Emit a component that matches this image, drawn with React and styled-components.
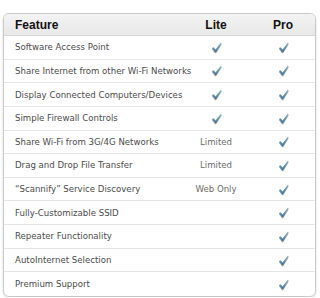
import React from "react";
import styled, { createGlobalStyle } from "styled-components";

const GlobalStyle = createGlobalStyle`
  body {
    margin: 0;
    background: #fff;
    font-family: "DejaVu Sans", "Liberation Sans", sans-serif;
  }
`;

const Table = styled.div`
  box-sizing: border-box;
  width: 313px;
  height: 284px;
  margin: 13px 0 0 3px;
  border: 1px solid #c9c9c9;
  border-radius: 6px;
  box-shadow: 0 1px 2px rgba(0, 0, 0, 0.18);
  overflow: hidden;
  display: grid;
  grid-template-columns: 177px 70px 1fr;
  grid-template-rows: 22px repeat(11, 1fr);
`;

const HeadCell = styled.div`
  display: flex;
  align-items: center;
  justify-content: ${(p) => (p.left ? "flex-start" : "center")};
  padding-left: ${(p) => (p.left ? "11px" : "0")};
  background: linear-gradient(#f3f3f3, #e8e8e8);
  border-bottom: 1px solid #d6d6d6;
  font-family: "Liberation Sans", Arial, sans-serif;
  font-weight: bold;
  font-size: 12px;
  color: #111;
`;

const Cell = styled.div`
  display: flex;
  align-items: center;
  justify-content: ${(p) => (p.left ? "flex-start" : "center")};
  padding-left: ${(p) => (p.left ? "11px" : "0")};
  border-bottom: ${(p) => (p.last ? "none" : "1px solid #e6e6e6")};
  font-size: 8.6px;
  color: ${(p) => (p.left ? "#4a4a4a" : "#6a6a6a")};
  white-space: nowrap;
`;

const Check = styled.svg`
  width: 11px;
  height: 11px;
  filter: drop-shadow(0 1px 0.6px rgba(60, 60, 60, 0.45));
`;

const CheckMark = () => (
  <Check viewBox="0 0 12 12">
    <defs>
      <linearGradient id="ck" x1="0" y1="0" x2="0" y2="1">
        <stop offset="0" stopColor="#8bb8d4" />
        <stop offset="1" stopColor="#3e7396" />
      </linearGradient>
    </defs>
    <path
      d="M1 6.6 L2.9 5.6 L5 8.2 L10.6 0.8 L11.6 1.6 L5.6 11.2 L4.4 11.2 Z"
      fill="url(#ck)"
    />
  </Check>
);

const rows = [
  ["Software Access Point", true, true],
  ["Share Internet from other Wi-Fi Networks", true, true],
  ["Display Connected Computers/Devices", true, true],
  ["Simple Firewall Controls", true, true],
  ["Share Wi-Fi from 3G/4G Networks", "Limited", true],
  ["Drag and Drop File Transfer", "Limited", true],
  ["\u201CScannify\u201D Service Discovery", "Web Only", true],
  ["Fully-Customizable SSID", false, true],
  ["Repeater Functionality", false, true],
  ["AutoInternet Selection", false, true],
  ["Premium Support", false, true],
];

const renderValue = (v) => {
  if (v === true) return <CheckMark />;
  if (!v) return null;
  return v;
};

export default function App() {
  return (
    <>
      <GlobalStyle />
      <Table>
        <HeadCell left>Feature</HeadCell>
        <HeadCell>Lite</HeadCell>
        <HeadCell>Pro</HeadCell>
        {rows.map(([name, lite, pro], i) => {
          const last = i === rows.length - 1;
          return (
            <React.Fragment key={name}>
              <Cell left last={last}>{name}</Cell>
              <Cell last={last}>{renderValue(lite)}</Cell>
              <Cell last={last}>{renderValue(pro)}</Cell>
            </React.Fragment>
          );
        })}
      </Table>
    </>
  );
}
